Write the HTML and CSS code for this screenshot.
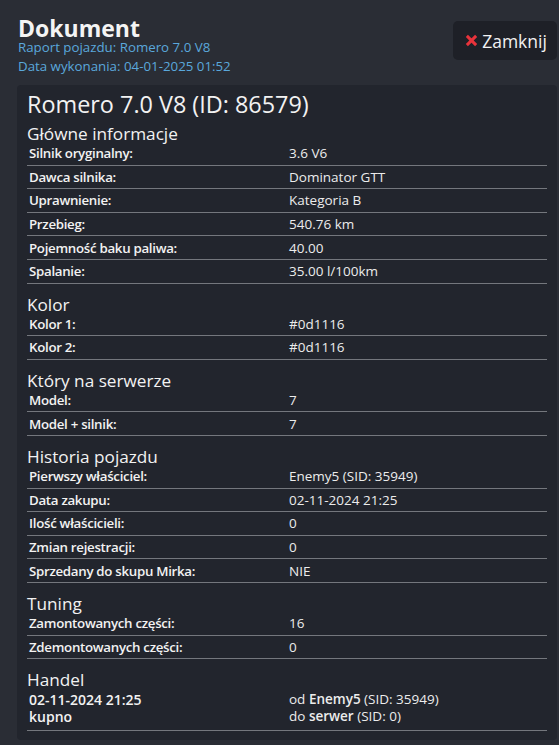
FILE: index.html
```html
<!DOCTYPE html>
<html lang="pl">
<head>
<meta charset="utf-8">
<title>Dokument</title>
<link rel="stylesheet" href="styles.css">
</head>
<body>
<div class="page">
  <header class="top">
    <div class="head-text">
      <h1 class="doc-title">Dokument</h1>
      <div class="sub">Raport pojazdu: Romero 7.0 V8</div>
      <div class="sub">Data wykonania: 04-01-2025 01:52</div>
    </div>
    <button class="close-btn" type="button">
      <svg class="x-icon" viewBox="0 0 14 14" width="13" height="13"><path d="M2 2 L12 12 M12 2 L2 12" stroke="#e8333b" stroke-width="3.2" stroke-linecap="butt"/></svg>
      <span>Zamknij</span>
    </button>
  </header>

  <main class="panel">
    <h2 class="veh-title">Romero 7.0 V8 (ID: 86579)</h2>

    <section class="sec">
      <h3 class="sec-title">Główne informacje</h3>
      <table class="info">
        <tr><td class="lbl">Silnik oryginalny:</td><td class="val">3.6 V6</td></tr>
        <tr><td class="lbl">Dawca silnika:</td><td class="val">Dominator GTT</td></tr>
        <tr><td class="lbl">Uprawnienie:</td><td class="val">Kategoria B</td></tr>
        <tr><td class="lbl">Przebieg:</td><td class="val">540.76 km</td></tr>
        <tr><td class="lbl">Pojemność baku paliwa:</td><td class="val">40.00</td></tr>
        <tr><td class="lbl">Spalanie:</td><td class="val">35.00 l/100km</td></tr>
      </table>
    </section>

    <section class="sec">
      <h3 class="sec-title">Kolor</h3>
      <table class="info">
        <tr><td class="lbl">Kolor 1:</td><td class="val">#0d1116</td></tr>
        <tr><td class="lbl">Kolor 2:</td><td class="val">#0d1116</td></tr>
      </table>
    </section>

    <section class="sec">
      <h3 class="sec-title">Który na serwerze</h3>
      <table class="info">
        <tr><td class="lbl">Model:</td><td class="val">7</td></tr>
        <tr><td class="lbl">Model + silnik:</td><td class="val">7</td></tr>
      </table>
    </section>

    <section class="sec">
      <h3 class="sec-title">Historia pojazdu</h3>
      <table class="info">
        <tr><td class="lbl">Pierwszy właściciel:</td><td class="val">Enemy5 (SID: 35949)</td></tr>
        <tr><td class="lbl">Data zakupu:</td><td class="val">02-11-2024 21:25</td></tr>
        <tr><td class="lbl">Ilość właścicieli:</td><td class="val">0</td></tr>
        <tr><td class="lbl">Zmian rejestracji:</td><td class="val">0</td></tr>
        <tr><td class="lbl">Sprzedany do skupu Mirka:</td><td class="val">NIE</td></tr>
      </table>
    </section>

    <section class="sec">
      <h3 class="sec-title">Tuning</h3>
      <table class="info">
        <tr><td class="lbl">Zamontowanych części:</td><td class="val">16</td></tr>
        <tr><td class="lbl">Zdemontowanych części:</td><td class="val">0</td></tr>
      </table>
    </section>

    <section class="sec">
      <h3 class="sec-title">Handel</h3>
      <table class="info trade">
        <tr>
          <td class="lbl"><div>02-11-2024 21:25</div><div>kupno</div></td>
          <td class="val"><div>od <b>Enemy5</b> (SID: 35949)</div><div>do <b>serwer</b> (SID: 0)</div></td>
        </tr>
      </table>
    </section>
  </main>
</div>
</body>
</html>
```

FILE: styles.css
```css
html, body {
  margin: 0;
  padding: 0;
}
body {
  background: #2a2d35;
  color: #f2f2f2;
  font-family: "Open Sans", "Noto Sans", sans-serif;
  width: 559px;
  height: 745px;
  overflow: hidden;
}
.page {
  padding: 0 2px 0 17px;
}
.top {
  display: flex;
  justify-content: space-between;
  align-items: flex-start;
  padding-top: 18px;
}
.head-text {
  padding-left: 1px;
}
.doc-title {
  margin: 0;
  font-size: 23px;
  font-weight: 700;
  line-height: 20px;
  color: #f4f4f4;
}
.sub {
  font-size: 13.3px;
  line-height: 19px;
  color: #5aa8dc;
}
.close-btn {
  margin-top: 3px;
  width: 104px;
  height: 39px;
  background: #1e2027;
  border: none;
  border-radius: 5px;
  color: #f2f2f2;
  font-family: inherit;
  font-size: 17.5px;
  display: flex;
  align-items: center;
  justify-content: center;
  gap: 4px;
  padding: 0 0 0 2px;
}
.x-icon {
  display: block;
}
.panel {
  margin-top: 9px;
  background: #22252d;
  border-radius: 4px;
  padding: 4px 10px 9px 10px;
}
.veh-title {
  margin: 0;
  font-size: 23.4px;
  font-weight: 400;
  line-height: 30px;
}
.sec-title {
  margin: 13px 0 0 0;
  font-size: 17.2px;
  font-weight: 400;
  line-height: 16px;
}
.sec:first-of-type .sec-title {
  margin-top: 7px;
}
.info {
  width: 100%;
  border-collapse: collapse;
  table-layout: fixed;
}
.info td {
  width: 50%;
  padding: 0 2px;
  height: 22.6px;
  line-height: 16px;
  border-bottom: 1px solid #74777d;
  vertical-align: middle;
}
.lbl {
  font-size: 13.3px;
  font-weight: 600;
  letter-spacing: -0.3px;
}
.val {
  font-size: 13.5px;
  font-weight: 400;
  color: #ececec;
}
.trade td {
  vertical-align: top;
  padding-top: 2.5px;
  padding-bottom: 5px;
  line-height: 17px;
}
.trade .lbl {
  font-size: 14px;
  letter-spacing: 0;
}
.trade b {
  font-weight: 600;
}
```
